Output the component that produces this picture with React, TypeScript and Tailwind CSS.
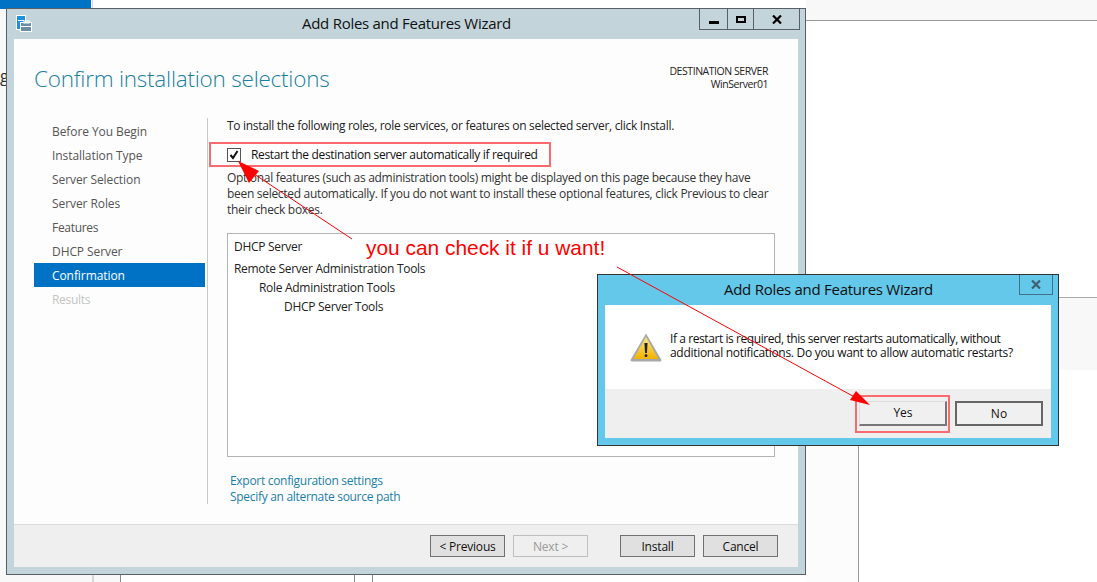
const font = { fontFamily: '"Open Sans", "Noto Sans", sans-serif' };

function SideItem({ label, active, muted, tight }: { label: string; active?: boolean; muted?: boolean; tight?: boolean }) {
  return (
    <div className={`h-6 flex items-center pl-[18px] text-[12px] ${tight ? "tracking-[-0.3px]" : "tracking-[-0.08px]"} ${active ? "bg-[#0072c6] text-white" : muted ? "text-[#c4c4c4]" : "text-[#555]"}`}>
      <span className="pt-[2px]">{label}</span>
    </div>
  );
}

function WizardButton({ label, disabled, className = "" }: { label: string; disabled?: boolean; className?: string }) {
  return (
    <div className={`w-[75px] h-[22px] flex items-center justify-center border text-[12px] tracking-[-0.2px] pt-[1px] ${disabled ? "border-[#bfbfbf] text-[#9a9a9a] bg-[#efefef]" : "border-[#707070] text-[#111] bg-[#e0e0e0]"} ${className}`}>
      {label}
    </div>
  );
}

function AppIcon() {
  return (
    <svg width="16" height="17" viewBox="0 0 16 17">
      <rect x="0.5" y="0.5" width="9" height="14" fill="#1c8fe0" stroke="#fff" />
      <rect x="2" y="5" width="6" height="1" fill="#fff" />
      <rect x="4" y="7" width="12" height="10" fill="#fff" />
      <rect x="5" y="8" width="10" height="8" fill="#6b8ca3" />
      <rect x="8" y="6" width="5" height="2" fill="none" stroke="#fff" />
      <rect x="5" y="11" width="10" height="1" fill="#fff" />
    </svg>
  );
}

function WarningIcon() {
  return (
    <svg width="32" height="29" viewBox="0 0 32 29">
      <defs>
        <linearGradient id="w" x1="0" y1="0" x2="0" y2="1">
          <stop offset="0" stopColor="#ffe680" />
          <stop offset="1" stopColor="#f0b400" />
        </linearGradient>
      </defs>
      <path d="M16 0.5 L31.5 27 Q31.5 28.5 30 28.5 L2 28.5 Q0.5 28.5 0.5 27 Z" fill="#a8a8a8" />
      <path d="M16 4 L28.5 26 L3.5 26 Z" fill="url(#w)" />
      <path d="M14.4 10 H17.6 L16.9 20 H15.1 Z" fill="#222" />
      <rect x="14.6" y="21.2" width="2.8" height="2.8" rx="1.2" fill="#222" />
    </svg>
  );
}

export default function App() {
  return (
    <div className="relative w-[1097px] h-[582px] overflow-hidden bg-white" style={font}>
      {/* Background desktop fragments */}
      <div className="absolute left-0 top-0 w-[91px] h-[9px] bg-[#0072c6]" />
      <div className="absolute left-[92px] top-0 w-px h-[9px] bg-[#d8d8d8]" />
      <div className="absolute left-0 top-[9px] w-[6px] h-[573px] bg-[#f8f8f8]" />
      <div className="absolute left-0 top-[68px] text-[16px] text-[#333] leading-none">g</div>
      <div className="absolute left-[806px] top-0 w-[291px] h-[21px] bg-[#f8f8f8] border-b border-[#999]" />
      <div className="absolute left-[1058px] top-[297px] w-[39px] h-[73px] bg-[#f8f8f8] border-t border-[#aaa]" />
      <div className="absolute left-0 top-[575px] w-[94px] h-[7px] bg-[#f8f8f8] border-r-2 border-[#d8d8d8]" />
      <div className="absolute left-[94px] top-[575px] w-[27px] h-[7px] bg-[#f8f8f8] border-r border-[#888]" />
      <div className="absolute left-[354px] top-[575px] w-[19px] h-[7px] border-x border-[#888]" />
      <div className="absolute left-[806px] top-[446px] w-[53px] h-[136px] bg-[#fcfcfc] border-r border-[#999]" />

      {/* Main wizard window */}
      <div className="absolute left-[6px] top-[8px] w-[800px] h-[567px] border border-[#5a5f66] bg-[#c3d5db] flex flex-col">
        <div className="h-[30px] shrink-0 relative flex items-center justify-center">
          <div className="absolute left-[9px] top-[6px]"><AppIcon /></div>
          <div className="text-[15px] text-[#111] tracking-[-0.27px] -mt-[1px] ml-[1px]">Add Roles and Features Wizard</div>
          <div className="absolute right-[5px] top-0 h-[21px] w-[101px] border border-t-0 border-[#5a5f66] flex">
            <div className="w-[28px] border-r border-[#5a5f66] flex items-center justify-center">
              <div className="w-[10px] h-[3px] bg-black mt-[6px]" />
            </div>
            <div className="w-[26px] border-r border-[#5a5f66] flex items-center justify-center">
              <div className="w-[10px] h-[7px] border-2 border-black" />
            </div>
            <div className="flex-1 flex items-center justify-center">
              <svg width="10" height="9" viewBox="0 0 10 9"><path d="M1 0.5 L9 8.5 M9 0.5 L1 8.5" stroke="#000" strokeWidth="2.2" /></svg>
            </div>
          </div>
        </div>

        <div className="flex-1 mx-[7px] mb-[7px] bg-[#fdfdfd] flex flex-col min-h-0">
          <div className="flex-1 min-h-0 flex flex-col">
            <div className="flex justify-between items-start h-[79px] shrink-0 pl-[20px] pr-[30px] pt-[25px]">
              <div className="text-[22.5px] font-light leading-[30px] text-[#1b7f9e] tracking-[-0.23px]">Confirm installation selections</div>
              <div className="text-right text-[10.5px] leading-[13px] text-[#222] tracking-[-0.45px] pt-[1px]">
                <div>DESTINATION SERVER</div>
                <div>WinServer01</div>
              </div>
            </div>
            <div className="flex flex-1 min-h-0">
              <div className="w-[171px] ml-[20px] pt-[1px] shrink-0">
                <SideItem label="Before You Begin" />
                <SideItem label="Installation Type" />
                <SideItem label="Server Selection" />
                <SideItem label="Server Roles" />
                <SideItem label="Features" tight />
                <SideItem label="DHCP Server" />
                <SideItem label="Confirmation" active />
                <SideItem label="Results" muted tight />
              </div>
              <div className="w-px h-[386px] ml-[2px] bg-[#c8c8c8] shrink-0" />
              <div className="flex-1 pl-[19px] pr-[23px] text-[12px] tracking-[-0.3px] text-[#222]">
                <div className="leading-[16px]">To install the following roles, role services, or features on selected server, click Install.</div>
                <div className="flex items-center h-[16px] mt-[13px]">
                  <div className="w-[14px] h-[14px] border border-[#555] bg-white flex items-center justify-center">
                    <svg width="10" height="10" viewBox="0 0 10 10"><path d="M1.5 5 L4 8 L8.5 1" fill="none" stroke="#111" strokeWidth="2" /></svg>
                  </div>
                  <span className="ml-[10px] text-[#111] tracking-[-0.34px]">Restart the destination server automatically if required</span>
                </div>
                <div className="mt-[7px] leading-[16px] text-[#333]">
                  Optional features (such as administration tools) might be displayed on this page because they have been selected automatically. If you do not want to install these optional features, click Previous to clear their check boxes.
                </div>
                <div className="mt-[15px] h-[224px] border border-[#b4b4b4] bg-white pt-[3px] pl-[6px] text-[#222]">
                  <div className="leading-[19px]">DHCP Server</div>
                  <div className="leading-[19px] mt-[3px]">Remote Server Administration Tools</div>
                  <div className="leading-[19px] pl-[25px]">Role Administration Tools</div>
                  <div className="leading-[19px] pl-[50px]">DHCP Server Tools</div>
                </div>
                <div className="mt-[16px] pl-[3px] text-[#1a7fa8] leading-[16px]">
                  <div>Export configuration settings</div>
                  <div>Specify an alternate source path</div>
                </div>
              </div>
            </div>
          </div>
          <div className="h-[43px] shrink-0 bg-[#efefef] border-t border-[#dcdcdc] flex items-center pl-[416px]">
            <WizardButton label="< Previous" />
            <WizardButton label="Next >" disabled className="ml-[8px]" />
            <WizardButton label="Install" className="ml-[32px]" />
            <WizardButton label="Cancel" className="ml-[8px]" />
          </div>
        </div>
      </div>

      {/* Confirm dialog */}
      <div className="absolute left-[597px] top-[274px] w-[462px] h-[172px] border border-[#333] bg-[#63c8ea] flex flex-col">
        <div className="h-[30px] shrink-0 relative flex items-center justify-center">
          <div className="text-[15px] text-[#111] tracking-[-0.27px] -mt-[1px] ml-[1px]">Add Roles and Features Wizard</div>
          <div className="absolute right-[5px] top-0 w-[34px] h-[20px] border border-t-0 border-[#44708a] flex items-center justify-center">
            <svg width="10" height="9" viewBox="0 0 10 9"><path d="M1 0.5 L9 8.5 M9 0.5 L1 8.5" stroke="#3f5f72" strokeWidth="2.2" /></svg>
          </div>
        </div>
        <div className="flex-1 mx-[7px] mb-[7px] flex flex-col min-h-0">
          <div className="h-[84px] bg-white shrink-0 flex pl-[25px] pt-[28px]">
            <WarningIcon />
            <div className="ml-[8px] -mt-[1px] text-[12px] leading-[14px] tracking-[-0.3px] text-[#111]">
              <div className="tracking-[-0.42px]">If a restart is required, this server restarts automatically, without</div>
              <div>additional notifications. Do you want to allow automatic restarts?</div>
            </div>
          </div>
          <div className="flex-1 bg-[#efefef] flex items-start pl-[254px] pt-[12px]">
            <div className="w-[88px] h-[25px] pl-[1px] flex items-center justify-center bg-[#f0f0f0] border border-[#e6e6e6] border-r-2 border-b-2 border-r-[#777] border-b-[#777] border-t-[#ddd] border-l-[#ddd] text-[12px] text-[#111]">Yes</div>
            <div className="w-[88px] h-[25px] ml-[8px] flex items-center justify-center bg-[#f0f0f0] border-2 border-[#666] text-[12px] text-[#111]">No</div>
          </div>
        </div>
      </div>

      {/* Annotation layer */}
      <div className="absolute left-[209px] top-[142px] w-[342px] h-[25px] border-2 border-[#fa6b6f]" />
      <div className="absolute left-[855px] top-[395px] w-[95px] h-[38px] border-2 border-[#fa6b6f]" />
      <svg className="absolute left-0 top-0" width="1097" height="582" viewBox="0 0 1097 582">
        <path d="M352 239 L248 170" stroke="#f00" strokeWidth="1" />
        <path d="M238 161 L259 171 L249 183 Z" fill="#f00" />
        <path d="M617 267 L860 400" stroke="#f00" strokeWidth="1" />
        <path d="M870 405 L850 400 L856 391 Z" fill="#f00" />
      </svg>
      <div className="absolute left-[366px] top-[235px] text-[20.9px] leading-[26px] text-[#f00] whitespace-nowrap" style={{ fontFamily: '"Liberation Sans", Arial, sans-serif' }}>
        you can check it if u want!
      </div>
    </div>
  );
}
